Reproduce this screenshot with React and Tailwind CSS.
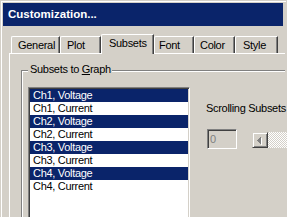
export default function App() {
  const tabs = [
    { label: "General", w: "w-[49px]", pl: "pl-[6px]" },
    { label: "Plot", w: "w-[41px]", pl: "pl-[6px]" },
    { label: "Subsets", w: "w-[53px]", pl: "pl-[7px]", selected: true },
    { label: "Font", w: "w-[40px]", pl: "pl-[4px]" },
    { label: "Color", w: "w-[41px]", pl: "pl-[5px]" },
    { label: "Style", w: "w-[43px]", pl: "pl-[7px]" },
  ];
  const rows = [
    ["Ch1, Voltage", true],
    ["Ch1, Current", false],
    ["Ch2, Voltage", true],
    ["Ch2, Current", false],
    ["Ch3, Voltage", true],
    ["Ch3, Current", false],
    ["Ch4, Voltage", true],
    ["Ch4, Current", false],
  ];
  return (
    <div className="w-[287px] h-[217px] overflow-hidden bg-[#d4d0c8] p-px font-['Liberation_Sans',Arial,sans-serif] text-[11px] tracking-[-0.3px] text-black">
      <div className="h-[240px] border-l border-t border-white p-px flex flex-col">
        <div className="w-[280px] h-[23px] shrink-0 bg-[#0a246a] pl-[5px] flex items-center text-white font-bold text-[11.5px] tracking-normal whitespace-nowrap">
          Customization...
        </div>
        <div className="ml-[6px] mt-[8px] flex flex-col flex-1">
          <div className="flex items-end pl-[2px] h-[19px]">
            {tabs.map((t) =>
              t.selected ? (
                <div
                  key={t.label}
                  className={`${t.w} ${t.pl} relative z-10 -mb-px h-[20px] shrink-0 bg-[#d4d0c8] border-t border-l border-white border-r border-r-[#404040] shadow-[inset_-1px_0_#808080] pt-[2px] leading-[13px] whitespace-nowrap rounded-tl-[2px]`}
                >
                  {t.label}
                </div>
              ) : (
                <div
                  key={t.label}
                  className={`${t.w} ${t.pl} h-[17px] shrink-0 border-t border-l border-white border-r border-r-[#404040] shadow-[inset_-1px_0_#808080] pt-[2px] leading-[13px] whitespace-nowrap rounded-tl-[2px]`}
                >
                  {t.label}
                </div>
              )
            )}
          </div>
          <div className="flex-1 border-t border-l border-white flex flex-col">
            <div className="ml-[11px] mt-[16px] flex-1 relative border-t border-l border-[#808080] shadow-[inset_1px_1px_#fff] pl-[6px] pt-[16px] flex items-start">
              <div className="absolute left-[6px] top-[-8px] bg-[#d4d0c8] pl-[2px] pr-[1px] leading-[13px] whitespace-nowrap">
                Subsets to <span className="underline underline-offset-[1px]">G</span>raph
              </div>
              <div className="w-[162px] h-[140px] shrink-0 bg-white border border-t-[#808080] border-l-[#808080] border-r-white border-b-white p-px shadow-[inset_1px_1px_#404040,inset_-1px_-1px_#d4d0c8]">
                {rows.map(([label, sel]) => (
                  <div
                    key={label}
                    className={
                      sel
                        ? "h-[13px] leading-[13px] pl-[3px] whitespace-nowrap bg-[#0a246a] text-white"
                        : "h-[13px] leading-[13px] pl-[3px] whitespace-nowrap text-black"
                    }
                  >
                    {label}
                  </div>
                ))}
              </div>
              <div className="ml-[16px] pt-[15px] flex flex-col shrink-0">
                <div className="leading-[13px] whitespace-nowrap">Scrolling Subsets</div>
                <div className="mt-[14px] flex items-start">
                  <div className="ml-px w-[30px] h-[20px] shrink-0 border border-t-[#808080] border-l-[#808080] border-r-white border-b-white shadow-[inset_1px_1px_#404040,inset_-1px_-1px_#d4d0c8] pl-[2px] pt-[3px] leading-[13px] text-[#808080]">
                    0
                  </div>
                  <div className="ml-[15px] mt-[3px] flex shrink-0">
                    <div className="w-[16px] h-[16px] border border-t-[#d4d0c8] border-l-[#d4d0c8] border-r-[#404040] border-b-[#404040] shadow-[inset_1px_1px_#fff,inset_-1px_-1px_#808080] relative">
                      <svg width="16" height="16" viewBox="0 0 16 16" className="absolute -left-px -top-px" shapeRendering="crispEdges">
                        <rect x="6" y="9" width="1" height="1" fill="#fff" />
                        <rect x="7" y="8" width="1" height="3" fill="#fff" />
                        <rect x="8" y="7" width="1" height="5" fill="#fff" />
                        <rect x="9" y="6" width="1" height="7" fill="#fff" />
                        <rect x="5" y="8" width="1" height="1" fill="#808080" />
                        <rect x="6" y="7" width="1" height="3" fill="#808080" />
                        <rect x="7" y="6" width="1" height="5" fill="#808080" />
                        <rect x="8" y="5" width="1" height="7" fill="#808080" />
                      </svg>
                    </div>
                    <div className="w-[40px] h-[16px] bg-[repeating-conic-gradient(#fff_0_25%,#d4d0c8_0_50%)] bg-[length:2px_2px]" />
                  </div>
                </div>
              </div>
            </div>
          </div>
        </div>
      </div>
    </div>
  );
}
